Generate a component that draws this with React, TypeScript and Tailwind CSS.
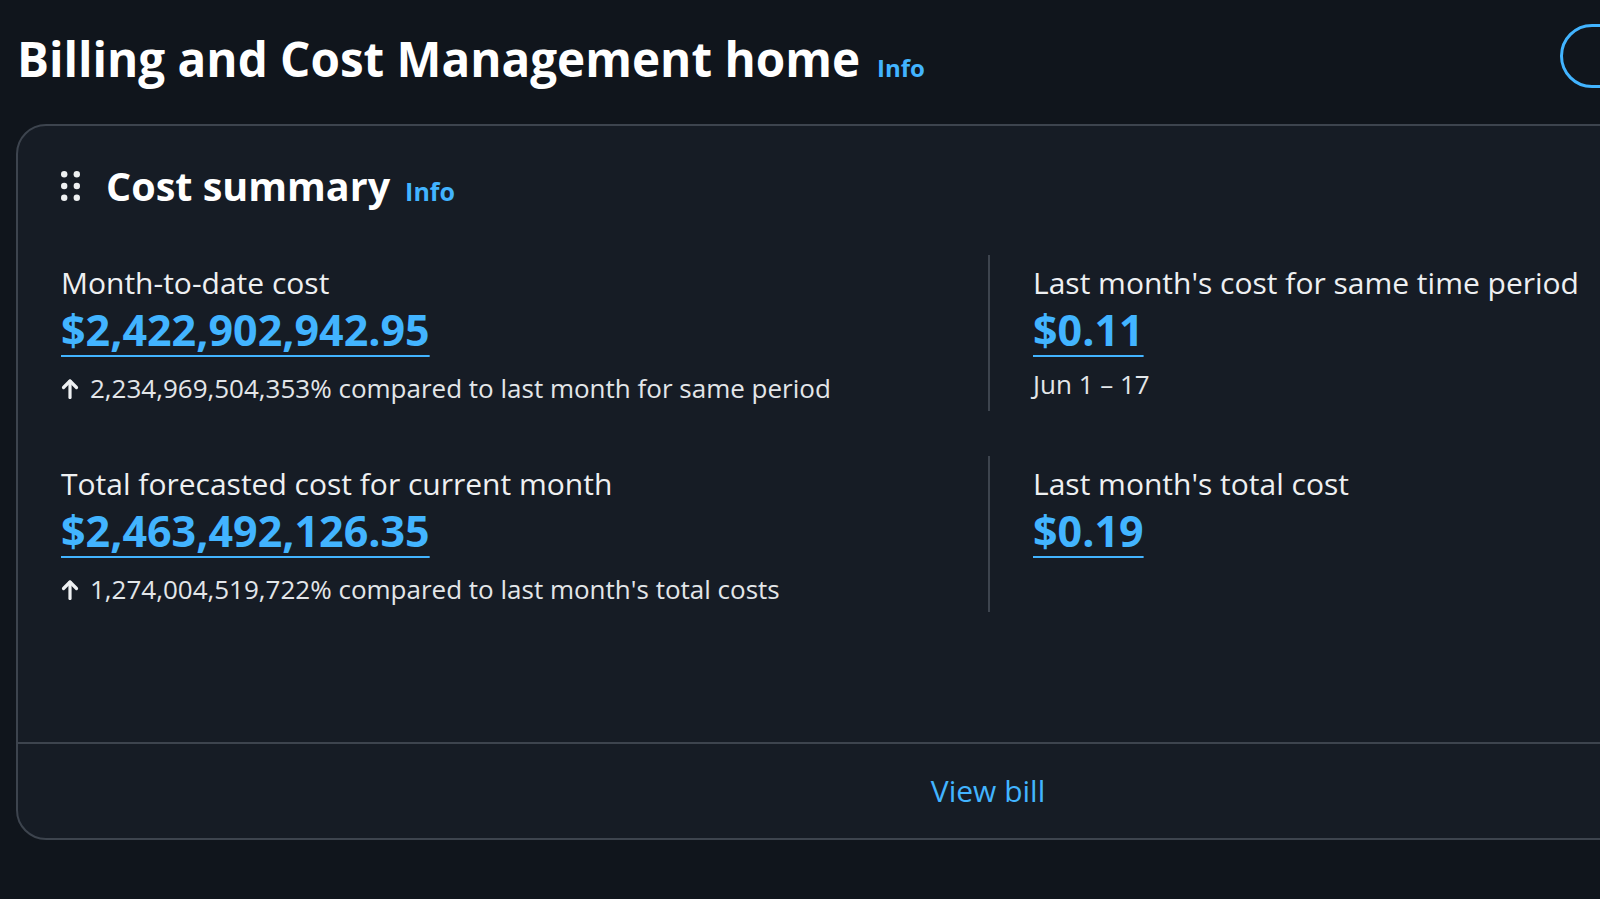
import React from "react";

// small 2x3 dot grip used next to the container title
const DragHandle = () => (
  <svg width="19" height="30" viewBox="0 0 19 30" fill="#eef0f2">
    <circle cx="3.2" cy="3.2" r="3.2" />
    <circle cx="15.8" cy="3.2" r="3.2" />
    <circle cx="3.2" cy="15" r="3.2" />
    <circle cx="15.8" cy="15" r="3.2" />
    <circle cx="3.2" cy="26.8" r="3.2" />
    <circle cx="15.8" cy="26.8" r="3.2" />
  </svg>
);

const ArrowUp = () => (
  <svg width="18" height="21" viewBox="0 0 18 21" fill="none" stroke="#eef0f2" strokeWidth="3.2" strokeLinecap="round" strokeLinejoin="round">
    <path d="M9 19.5V3" />
    <path d="M2.5 9.5L9 3L15.5 9.5" />
  </svg>
);

type StatProps = {
  label: string;
  value: string;
  note?: string;
  arrow?: boolean;
  right?: boolean;
};

const Stat = ({ label, value, note, arrow, right }: StatProps) => (
  <div className="pt-2">
    <div className="text-[30px] leading-[40px] text-[#eef0f2]">{label}</div>
    <div className="mt-[3px] text-[43px] leading-[48px] font-bold text-[#42b4ff]">
      <span className="underline decoration-2 underline-offset-[9px]">{value}</span>
    </div>
    {note && (
      <div
        className={
          right
            ? "mt-[13px] text-[26px] leading-[34px] text-[#e3e6e9]"
            : "mt-[17px] flex items-center gap-[11px] text-[26px] leading-[34px] text-[#e3e6e9]"
        }
      >
        {arrow && <ArrowUp />}
        <span>{note}</span>
      </div>
    )}
  </div>
);

const rows = [
  {
    left: {
      label: "Month-to-date cost",
      value: "$2,422,902,942.95",
      note: "2,234,969,504,353% compared to last month for same period",
    },
    right: {
      label: "Last month's cost for same time period",
      value: "$0.11",
      note: "Jun 1 – 17",
    },
  },
  {
    left: {
      label: "Total forecasted cost for current month",
      value: "$2,463,492,126.35",
      note: "1,274,004,519,722% compared to last month's total costs",
    },
    right: {
      label: "Last month's total cost",
      value: "$0.19",
      note: "",
    },
  },
];

export default function App() {
  return (
    <div className="w-[1600px] h-[899px] overflow-hidden bg-[#10151c] text-white font-['Open_Sans',sans-serif]">
      {/* page header */}
      <div className="flex items-start pt-[29px] pl-[17px]">
        <div className="flex items-baseline gap-[17px]">
          <h1 className="text-[47.6px] leading-[60px] font-bold text-white">Billing and Cost Management home</h1>
          <span className="text-[24px] font-bold text-[#42b4ff]">Info</span>
        </div>
        <div className="ml-auto mr-[-60px] mt-[-5px] h-[64px] w-[100px] shrink-0 rounded-full border-[3px] border-[#42b4ff]" />
      </div>

      {/* cost summary container */}
      <div className="mt-[35px] ml-[16px] w-[1944px] rounded-[30px] border-2 border-[#3d444e] bg-[#161c25]">
        <div className="pt-[34px] pl-[43px] flex items-center h-[86px]">
          <DragHandle />
          <div className="ml-[26px] flex items-baseline gap-[15px]">
            <h2 className="text-[39.5px] leading-[52px] font-bold text-white">Cost summary</h2>
            <span className="text-[25px] font-bold text-[#42b4ff]">Info</span>
          </div>
        </div>

        <div className="mt-[43px] flex flex-col gap-[45px]">
          {rows.map((row, i) => (
            <div key={i} className="flex h-[156px]">
              <div className="w-[970px] pl-[43px]">
                <Stat {...row.left} arrow />
              </div>
              <div className="border-l-2 border-[#3d444e] pl-[43px]">
                <Stat {...row.right} right />
              </div>
            </div>
          ))}
        </div>

        <div className="mt-[130px] h-[96px] border-t-2 border-[#3d444e] flex items-center justify-center">
          <span className="text-[30px] leading-[40px] text-[#42b4ff]">View bill</span>
        </div>
      </div>
    </div>
  );
}
